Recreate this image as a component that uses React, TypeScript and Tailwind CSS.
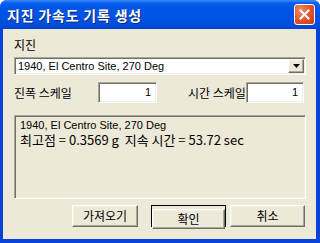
import React from "react";

const kr = { fontFamily: '"Noto Sans CJK KR", "Noto Sans", sans-serif' };
const lat = { fontFamily: '"Liberation Sans", "Noto Sans CJK KR", sans-serif' };

const sunken =
  "border border-t-[#ACA899] border-l-[#ACA899] border-b-white border-r-white shadow-[inset_1px_1px_0_#716F64,inset_-1px_-1px_0_#F1EFE2]";
const raised =
  "border border-t-white border-l-white border-b-[#716F64] border-r-[#716F64] shadow-[inset_-1px_-1px_0_#ACA899,inset_1px_1px_0_#F1EFE2]";

export default function App() {
  return (
    <div className="w-[320px] h-[243px] flex flex-col bg-[#0842D6] rounded-t-[7px] overflow-hidden">
      {/* Title bar */}
      <div className="h-[29px] flex items-center justify-between pl-[7px] pr-[5px] bg-[linear-gradient(to_bottom,#3A8CF8_0px,#0A5EEE_3px,#0055E8_8px,#0052E2_20px,#004BD8_26px,#0044CF_29px)]">
        <span
          className="text-white font-bold text-[14px] leading-none [text-shadow:1px_1px_0_#0A2A7A] tracking-[0.8px]"
          style={kr}
        >
          지진 가속도 기록 생성
        </span>
        <div className="w-[21px] h-[21px] rounded-[3px] border border-white bg-[radial-gradient(circle_at_30%_30%,#F08A66,#E0522B_55%,#C03A18)] flex items-center justify-center">
          <svg width="11" height="11" viewBox="0 0 11 11">
            <path d="M1.5 1.5 L9.5 9.5 M9.5 1.5 L1.5 9.5" stroke="white" strokeWidth="2" strokeLinecap="square" />
          </svg>
        </div>
      </div>
      {/* Body */}
      <div className="flex-1 ml-[3px] mr-[4px] mb-[4px] bg-[#ECE9D8] pl-[11px] pr-[10px] pt-[9px] flex flex-col text-black">
        <div className="text-[12px] leading-[14px] h-[14px]" style={kr}>
          지진
        </div>
        <div className={`mt-[5px] h-[18px] bg-white flex items-center ${sunken}`}>
          <span className="flex-1 pl-[3px] text-[11px] leading-none" style={lat}>
            1940, El Centro Site, 270 Deg
          </span>
          <div className={`w-[16px] h-[14px] mr-[1px] bg-[#ECE9D8] flex items-center justify-center ${raised}`}>
            <svg width="7" height="4" viewBox="0 0 7 4">
              <path d="M0 0 H7 L3.5 4 Z" fill="black" />
            </svg>
          </div>
        </div>
        <div className="mt-[7px] h-[21px] flex items-center">
          <span className="w-[84px] text-[12px] leading-none" style={kr}>
            진폭 스케일
          </span>
          <div className={`w-[59px] h-[21px] bg-white flex items-center justify-end pr-[5px] ${sunken}`}>
            <span className="text-[11px] leading-none" style={lat}>1</span>
          </div>
          <div className="w-[31px]" />
          <div className="relative flex items-center w-[116px] h-[21px]">
            <span className="text-[12px] leading-none whitespace-nowrap" style={kr}>
              시간 스케일
            </span>
            <div
              className={`absolute left-[58px] top-0 w-[58px] h-[21px] bg-white flex items-center justify-end pr-[5px] ${sunken}`}
            >
              <span className="text-[11px] leading-none" style={lat}>1</span>
            </div>
          </div>
        </div>
        <div className={`mt-[12px] h-[84px] pl-[5px] pt-[3px] ${sunken}`}>
          <div className="text-[11px] leading-[13px]" style={lat}>
            1940, El Centro Site, 270 Deg
          </div>
          <div className="text-[13px] leading-[15px] whitespace-pre" style={kr}>
            최고점 = 0.3569 g  지속 시간 = 53.72 sec
          </div>
        </div>
        <div className="mt-[6px] flex justify-end gap-[4px] pr-[1px]">
          <button className={`w-[66px] h-[22px] bg-[#ECE9D8] text-[12px] leading-none ${raised}`} style={kr}>
            가져오기
          </button>
          <div className="ml-[9px] w-[75px] h-[22px] border border-black">
            <button className={`w-full h-full bg-[#ECE9D8] text-[12px] leading-none ${raised}`} style={kr}>
              확인
            </button>
          </div>
          <button className={`w-[75px] h-[22px] bg-[#ECE9D8] text-[12px] leading-none ${raised}`} style={kr}>
            취소
          </button>
        </div>
      </div>
    </div>
  );
}
